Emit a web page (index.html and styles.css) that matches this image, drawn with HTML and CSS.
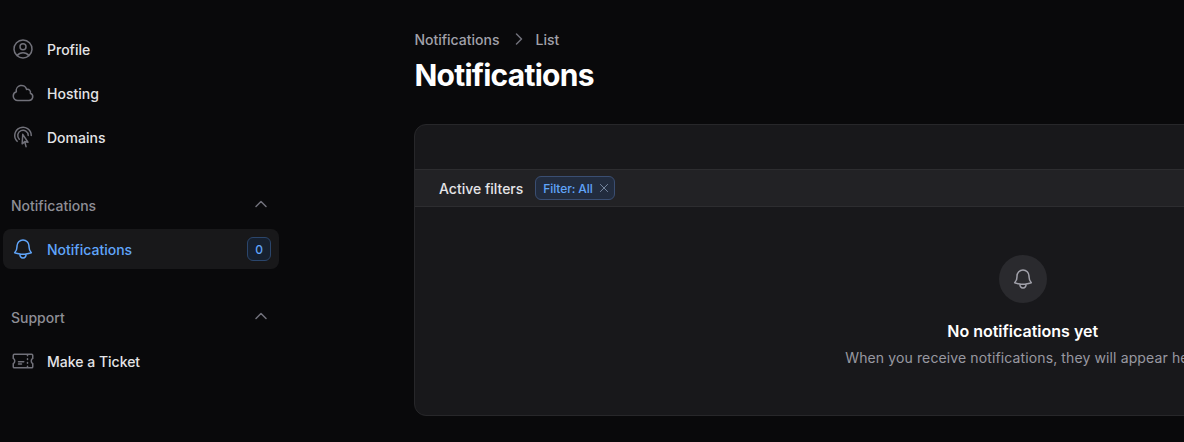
FILE: index.html
```html
<!DOCTYPE html>
<html lang="en">

<head>
    <meta charset="UTF-8">
    <meta name="viewport" content="width=device-width, initial-scale=1.0">
    <title>Notifications</title>
    <link rel="stylesheet" href="styles.css">
</head>

<body>
    <div class="layout">
        <!-- Sidebar -->
        <aside class="sidebar">
            <nav class="nav-group">
                <a class="nav-item" href="#">
                    <svg class="nav-icon" viewBox="0 0 24 24"><path d="M17.982 18.725A7.488 7.488 0 0 0 12 15.75a7.488 7.488 0 0 0-5.982 2.975m11.963 0a9 9 0 1 0-11.963 0m11.963 0A8.966 8.966 0 0 1 12 21a8.966 8.966 0 0 1-5.982-2.275M15 9.75a3 3 0 1 1-6 0 3 3 0 0 1 6 0Z"/></svg>
                    <span class="nav-text">Profile</span>
                </a>
                <a class="nav-item" href="#">
                    <svg class="nav-icon" viewBox="0 0 24 24"><path d="M2.25 15a4.5 4.5 0 0 0 4.5 4.5H18a3.75 3.75 0 0 0 1.332-7.257 3 3 0 0 0-3.758-3.848 5.25 5.25 0 0 0-10.233 2.33A4.502 4.502 0 0 0 2.25 15Z"/></svg>
                    <span class="nav-text">Hosting</span>
                </a>
                <a class="nav-item" href="#">
                    <svg class="nav-icon" viewBox="0 0 24 24"><path d="M15.042 21.672 13.684 16.6m0 0-2.51 2.225.569-9.47 5.227 7.917-3.286-.672Zm-7.518-.267A8.25 8.25 0 1 1 20.25 10.5M8.288 14.212A5.25 5.25 0 1 1 17.25 10.5"/></svg>
                    <span class="nav-text">Domains</span>
                </a>
            </nav>

            <section class="nav-section">
                <div class="nav-label">
                    <span>Notifications</span>
                    <svg class="nav-chevron" viewBox="0 0 20 20"><path d="M5 12.5 10 7.5l5 5"/></svg>
                </div>
                <nav class="nav-group">
                    <a class="nav-item active" href="#">
                        <svg class="nav-icon" viewBox="0 0 24 24"><path d="M14.857 17.082a23.848 23.848 0 0 0 5.454-1.31A8.967 8.967 0 0 1 18 9.75V9A6 6 0 0 0 6 9v.75a8.967 8.967 0 0 1-2.312 6.022c1.733.64 3.56 1.085 5.455 1.31m5.714 0a24.255 24.255 0 0 1-5.714 0m5.714 0a3 3 0 1 1-5.714 0"/></svg>
                        <span class="nav-text">Notifications</span>
                        <span class="nav-badge">0</span>
                    </a>
                </nav>
            </section>

            <section class="nav-section">
                <div class="nav-label">
                    <span>Support</span>
                    <svg class="nav-chevron" viewBox="0 0 20 20"><path d="M5 12.5 10 7.5l5 5"/></svg>
                </div>
                <nav class="nav-group">
                    <a class="nav-item" href="#">
                        <svg class="nav-icon" viewBox="0 0 24 24"><path d="M16.5 6v.75m0 3v.75m0 3v.75m0 3V18m-9-5.25h5.25M7.5 15h3M3.375 5.25c-.621 0-1.125.504-1.125 1.125v3.026a2.999 2.999 0 0 1 0 5.198v3.026c0 .621.504 1.125 1.125 1.125h17.25c.621 0 1.125-.504 1.125-1.125v-3.026a2.999 2.999 0 0 1 0-5.198V6.375c0-.621-.504-1.125-1.125-1.125H3.375Z"/></svg>
                        <span class="nav-text">Make a Ticket</span>
                    </a>
                </nav>
            </section>
        </aside>

        <!-- Main Content -->
        <main class="content">
            <div class="breadcrumbs">
                <span>Notifications</span>
                <svg class="crumb-arrow" viewBox="0 0 20 20"><path d="M7.5 5l5 5-5 5"/></svg>
                <span>List</span>
            </div>
            <h1>Notifications</h1>

            <div class="card">
                <div class="card-toolbar"></div>
                <div class="filters">
                    <span class="filters-title">Active filters</span>
                    <span class="chip">
                        Filter: All
                        <svg class="chip-close" viewBox="0 0 20 20"><path d="M4 4l12 12m0-12L4 16"/></svg>
                    </span>
                </div>
                <div class="empty">
                    <div class="empty-icon">
                        <svg viewBox="0 0 24 24"><path d="M14.857 17.082a23.848 23.848 0 0 0 5.454-1.31A8.967 8.967 0 0 1 18 9.75V9A6 6 0 0 0 6 9v.75a8.967 8.967 0 0 1-2.312 6.022c1.733.64 3.56 1.085 5.455 1.31m5.714 0a24.255 24.255 0 0 1-5.714 0m5.714 0a3 3 0 1 1-5.714 0"/></svg>
                    </div>
                    <h2>No notifications yet</h2>
                    <p>When you receive notifications, they will appear here.</p>
                </div>
            </div>
        </main>
    </div>
</body>
</html>
```

FILE: styles.css
```css
html, body {
    height: 100%;
}

body {
    font-family: 'Inter', sans-serif;
    margin: 0;
    background-color: #09090B;
    color: #E4E4E7;
    overflow: hidden;
}

svg {
    fill: none;
    stroke: currentColor;
    stroke-linecap: round;
    stroke-linejoin: round;
    flex-shrink: 0;
}

.layout {
    display: flex;
    width: 1631px;
}

/* Sidebar */
.sidebar {
    width: 276px;
    flex-shrink: 0;
    padding: 29px 0 0 3px;
    display: flex;
    flex-direction: column;
    gap: 36px;
}

.nav-group {
    display: flex;
    flex-direction: column;
    gap: 4px;
}

.nav-section {
    display: flex;
    flex-direction: column;
    gap: 12px;
}

.nav-item {
    display: flex;
    align-items: center;
    gap: 12px;
    height: 40px;
    padding: 0 8px;
    border-radius: 8px;
    box-sizing: border-box;
    font-size: 14px;
    font-weight: 500;
    line-height: 20px;
    color: #E4E4E7;
    text-decoration: none;
}

.nav-text {
    padding-top: 2px;
}

.nav-icon {
    width: 24px;
    height: 24px;
    stroke-width: 1.5;
    color: #71717A;
}

.nav-item.active {
    background-color: #18181A;
    color: #60A5FA;
}

.nav-item.active .nav-icon {
    color: #60A5FA;
}

.nav-badge {
    margin-left: auto;
    width: 24px;
    height: 24px;
    display: flex;
    align-items: center;
    justify-content: center;
    box-sizing: border-box;
    padding-top: 1px;
    border: 1px solid #2B466C;
    border-radius: 6px;
    background-color: #16202F;
    font-size: 12px;
    color: #60A5FA;
}

.nav-label {
    display: flex;
    align-items: center;
    justify-content: space-between;
    height: 24px;
    padding: 0 8px;
    font-size: 14px;
    font-weight: 500;
    color: #8E8E96;
}

.nav-chevron {
    width: 20px;
    height: 20px;
    margin-top: -2px;
    stroke-width: 1.5;
    color: #71717A;
}

/* Main */
.content {
    margin-left: 135.4px;
    flex: 1;
    padding-top: 29px;
}

.breadcrumbs {
    display: flex;
    align-items: center;
    gap: 10px;
    height: 20px;
    font-size: 14px;
    font-weight: 500;
    color: #A1A1AA;
}

.crumb-arrow {
    width: 20px;
    height: 20px;
    margin-right: -4px;
    stroke-width: 1.5;
    color: #71717A;
}

h1 {
    margin: 8px 0 0;
    font-size: 30px;
    font-weight: 700;
    line-height: 36px;
    letter-spacing: -0.75px;
    color: #FFFFFF;
}

.card {
    margin-top: 31px;
    height: 292px;
    box-sizing: border-box;
    background-color: #18181B;
    border: 1px solid #27272A;
    border-radius: 12px;
}

.card-toolbar {
    height: 44px;
}

.filters {
    height: 38px;
    box-sizing: border-box;
    display: flex;
    align-items: center;
    gap: 12px;
    padding: 0 23.6px;
    background-color: #222225;
    border-top: 1px solid #2D2D30;
    border-bottom: 1px solid #2D2D30;
}

.filters-title {
    font-size: 14px;
    font-weight: 500;
    color: #E4E4E7;
}

.chip {
    display: flex;
    align-items: center;
    gap: 5px;
    height: 24px;
    padding: 0 4px 0 7px;
    box-sizing: border-box;
    background-color: #222C3E;
    border: 1px solid #3A4E72;
    border-radius: 6px;
    font-size: 12px;
    font-weight: 500;
    letter-spacing: -0.1px;
    color: #60A5FA;
}

.chip-close {
    width: 12px;
    height: 12px;
    stroke-width: 1.4;
    color: #8394AE;
}

.empty {
    display: flex;
    flex-direction: column;
    align-items: center;
    padding-top: 48px;
}

.empty-icon {
    width: 48px;
    height: 48px;
    border-radius: 50%;
    background-color: #2A2A2E;
    color: #A1A1AA;
    display: flex;
    align-items: center;
    justify-content: center;
}

.empty-icon svg {
    width: 24px;
    height: 24px;
    stroke-width: 1.5;
}

h2 {
    margin: 16px 0 0;
    font-size: 16px;
    font-weight: 600;
    line-height: 24px;
    color: #FFFFFF;
}

p {
    margin: 5px 0 0;
    padding-left: 6px;
    font-size: 14px;
    line-height: 20px;
    letter-spacing: 0.12px;
    color: #9898A1;
}
```
